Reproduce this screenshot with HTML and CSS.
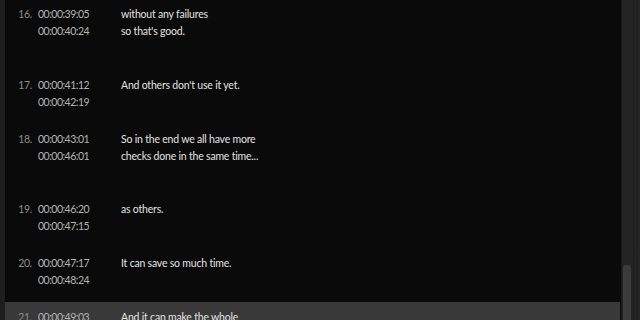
FILE: index.html
```html
<!DOCTYPE html>
<html lang="en">
<head>
  <meta charset="UTF-8" />
  <title>Captions</title>
  <link rel="stylesheet" href="styles.css">
</head>
<body>
  <div class="panel">
    <div class="caption-list">
      <div class="caption">
        <div class="num">16.</div>
        <div class="times"><span>00:00:39:05</span><span>00:00:40:24</span></div>
        <div class="text">without any failures<br>so that's good.</div>
      </div>
      <div class="caption">
        <div class="num">17.</div>
        <div class="times"><span>00:00:41:12</span><span>00:00:42:19</span></div>
        <div class="text">And others don't use it yet.</div>
      </div>
      <div class="caption">
        <div class="num">18.</div>
        <div class="times"><span>00:00:43:01</span><span>00:00:46:01</span></div>
        <div class="text">So in the end we all have more<br>checks done in the same time...</div>
      </div>
      <div class="caption">
        <div class="num">19.</div>
        <div class="times"><span>00:00:46:20</span><span>00:00:47:15</span></div>
        <div class="text">as others.</div>
      </div>
      <div class="caption">
        <div class="num">20.</div>
        <div class="times"><span>00:00:47:17</span><span>00:00:48:24</span></div>
        <div class="text">It can save so much time.</div>
      </div>
      <div class="caption selected">
        <div class="num">21.</div>
        <div class="times"><span>00:00:49:03</span><span>00:00:50:11</span></div>
        <div class="text">And it can make the whole<br>process easier.</div>
      </div>
    </div>
    <div class="scrollbar">
      <div class="thumb"></div>
    </div>
    <div class="edge"></div>
  </div>
</body>
</html>
```

FILE: styles.css
```css
html, body {
  overflow: hidden;
  height: 100%;
}
body {
  margin: 0;
  background: #1e1e1e;
  font-family: Lato, "Open Sans", sans-serif;
  font-size: 10.5px;
  color: #dcdcdc;
}
.panel {
  display: flex;
  height: 100%;
  padding-left: 5px;
}
.caption-list {
  flex: 1;
  background: #0a0a0a;
  overflow: hidden;
  padding-right: 1px;
}
.caption {
  display: flex;
  padding: 7px 0 12.8px;
  line-height: 17px;
}
.caption:first-child {
  margin-top: -1px;
}
.caption.selected {
  background: #393939;
}
.num {
  width: 27px;
  text-align: right;
  color: #8c8c8c;
  letter-spacing: -0.3px;
}
.times {
  display: flex;
  flex-direction: column;
  margin-left: 6px;
  width: 83px;
  color: #b4b4b4;
  letter-spacing: -0.5px;
}
.text {
  padding-bottom: 17px;
  color: #e2e2e2;
  letter-spacing: -0.2px;
}
.scrollbar {
  position: relative;
  width: 11px;
  background: #242424;
  border-left: 1px solid #1a1a1a;
}
.thumb {
  position: absolute;
  top: 265px;
  left: 1px;
  right: 2px;
  bottom: 0;
  background: #3b3b3b;
  border-radius: 3px 3px 0 0;
}
.edge {
  width: 7px;
  background: linear-gradient(to right, #1c1c1c, #262626 40%, #1e1e1e 60%, #2a2a2a);
}
```
